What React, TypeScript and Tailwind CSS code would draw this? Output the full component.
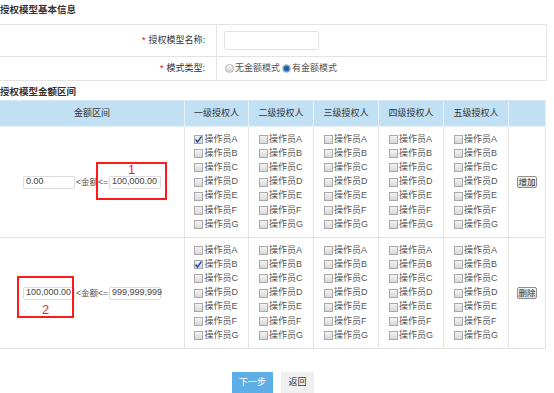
import React from "react";

const font = { fontFamily: '"Liberation Sans", "Noto Sans CJK SC", sans-serif' };

function Box({ checked }: { checked?: boolean }) {
  return (
    <span className="relative inline-block w-[9px] h-[9px] border border-[#a9a9a9] bg-gradient-to-b from-[#f4f4f4] to-[#d8d8d8] mr-[1px] shrink-0">
      {checked && (
        <svg className="absolute -left-[1px] -top-[1px]" width="9" height="9" viewBox="0 0 9 9">
          <polyline points="1.5,4.5 3.5,7 7.5,1.5" fill="none" stroke="#1f4fa8" strokeWidth="1.4" />
        </svg>
      )}
    </span>
  );
}

function Radio({ checked }: { checked?: boolean }) {
  return (
    <span className="relative inline-flex items-center justify-center w-[9px] h-[9px] rounded-full border border-[#b5b5b5] bg-gradient-to-b from-[#f5f5f5] to-[#d5d5d5] mr-[1px]">
      {checked && <span className="w-[5px] h-[5px] rounded-full bg-[#1a5fa8] ring-1 ring-[#5aa0e0]" />}
    </span>
  );
}

const ops = ["A", "B", "C", "D", "E", "F", "G"];

function OpList({ checkedIdx }: { checkedIdx: number }) {
  return (
    <div className="flex flex-col items-start">
      {ops.map((o, i) => (
        <div key={o} className="flex items-center h-[14.2px] text-[9px] text-[#555]">
          <Box checked={i === checkedIdx} />
          <span>操作员{o}</span>
        </div>
      ))}
    </div>
  );
}

function Inp({ v }: { v: string }) {
  return (
    <span className="inline-flex items-center w-[52px] h-[13px] border border-[#dcdcdc] rounded-[2px] px-[2px] text-[9px] text-[#444] bg-white">
      {v}
    </span>
  );
}

function SmallBtn({ t }: { t: string }) {
  return (
    <span className="inline-flex items-center justify-center w-[20px] h-[12px] border border-[#8f8f8f] rounded-[2px] bg-gradient-to-b from-[#fafafa] to-[#dedede] text-[8.5px] text-[#333] leading-none">
      {t}
    </span>
  );
}

const cols = "grid grid-cols-[185px_64px_65px_65px_65px_65px_37px]";

function RangeRow({ from, to, checkedIdx, btn, mark }: { from: string; to: string; checkedIdx: number; btn: string; mark: 1 | 2 }) {
  return (
    <>
      <div className="relative h-[111px] border-r border-b border-[#e3e3e3] flex items-center justify-center text-[8.5px] text-[#555]">
        <Inp v={from} />
        <span className="mx-[1px]">&lt;金额&lt;=</span>
        <Inp v={to} />
        {mark === 1 ? (
          <div className="absolute left-[96px] top-[35px] w-[71px] h-[38px] border-2 border-[#ff1a1a] flex justify-center">
            <span className="text-[13px] leading-[11px] text-[#ff1a1a]">1</span>
          </div>
        ) : (
          <div className="absolute left-[17px] top-[38px] w-[57px] h-[42px] border-2 border-[#ff1a1a] flex justify-center items-end">
            <span className="text-[13px] leading-[11px] text-[#ff1a1a] mb-[1px]">2</span>
          </div>
        )}
      </div>
      {[0, 1, 2, 3, 4].map((c) => (
        <div key={c} className="h-[111px] border-r border-b border-[#e3e3e3] flex items-center justify-center">
          <OpList checkedIdx={c === 0 ? checkedIdx : -1} />
        </div>
      ))}
      <div className="h-[111px] border-r border-b border-[#e3e3e3] flex items-center justify-center">
        <SmallBtn t={btn} />
      </div>
    </>
  );
}

export default function App() {
  const heads = ["金额区间", "一级授权人", "二级授权人", "三级授权人", "四级授权人", "五级授权人", ""];
  return (
    <div className="w-[554px] h-[393px] bg-white overflow-hidden" style={font}>
      <div className="ml-[-1px] w-[547px]">
        <div className="h-[24px] pt-[4px] pl-[1px] text-[9.5px] font-bold text-[#333] leading-[12px]">授权模型基本信息</div>
        <div className="border-t border-l border-[#e3e3e3]">
          <div className="grid grid-cols-[217px_330px]">
            <div className="h-[32px] border-r border-b border-[#e3e3e3] flex items-center justify-end pr-[11px] text-[9px] text-[#333]">
              <span className="text-[#e60000] mr-[3px]">*</span>授权模型名称:
            </div>
            <div className="h-[32px] border-r border-b border-[#e3e3e3] flex items-center pl-[7px]">
              <span className="w-[95px] h-[19px] border border-[#e2e2e2] rounded-[2px] bg-white" />
            </div>
            <div className="h-[24px] border-r border-b border-[#e3e3e3] flex items-center justify-end pr-[11px] text-[9px] text-[#333]">
              <span className="text-[#e60000] mr-[3px]">*</span>模式类型:
            </div>
            <div className="h-[24px] border-r border-b border-[#e3e3e3] flex items-center pl-[8px] text-[9px] text-[#555]">
              <Radio />
              <span className="mr-[2px]">无金额模式</span>
              <Radio checked />
              <span>有金额模式</span>
            </div>
          </div>
        </div>
        <div className="h-[19px] pt-[5px] pl-[1px] text-[9.5px] font-bold text-[#333] leading-[12px]">授权模型金额区间</div>
        <div className={`${cols} border-t border-l border-[#d6e6f2]`}>
          {heads.map((h, i) => (
            <div
              key={i}
              className="h-[26px] bg-[#c1e0f4] border-r border-b border-[#e8f2fa] flex items-center justify-center text-[9px] text-[#333]"
            >
              {h}
            </div>
          ))}
          <RangeRow from="0.00" to="100,000.00" checkedIdx={0} btn="增加" mark={1} />
          <RangeRow from="100,000.00" to="999,999,999" checkedIdx={1} btn="删除" mark={2} />
        </div>
        <div className="flex justify-center gap-[8px] mt-[23px] pl-[1px]">
          <span className="w-[41px] h-[21px] bg-[#5dade6] text-white text-[9px] flex items-center justify-center">下一步</span>
          <span className="w-[33px] h-[21px] bg-[#f0f0f0] text-[#333] text-[9px] flex items-center justify-center">返回</span>
        </div>
      </div>
    </div>
  );
}
